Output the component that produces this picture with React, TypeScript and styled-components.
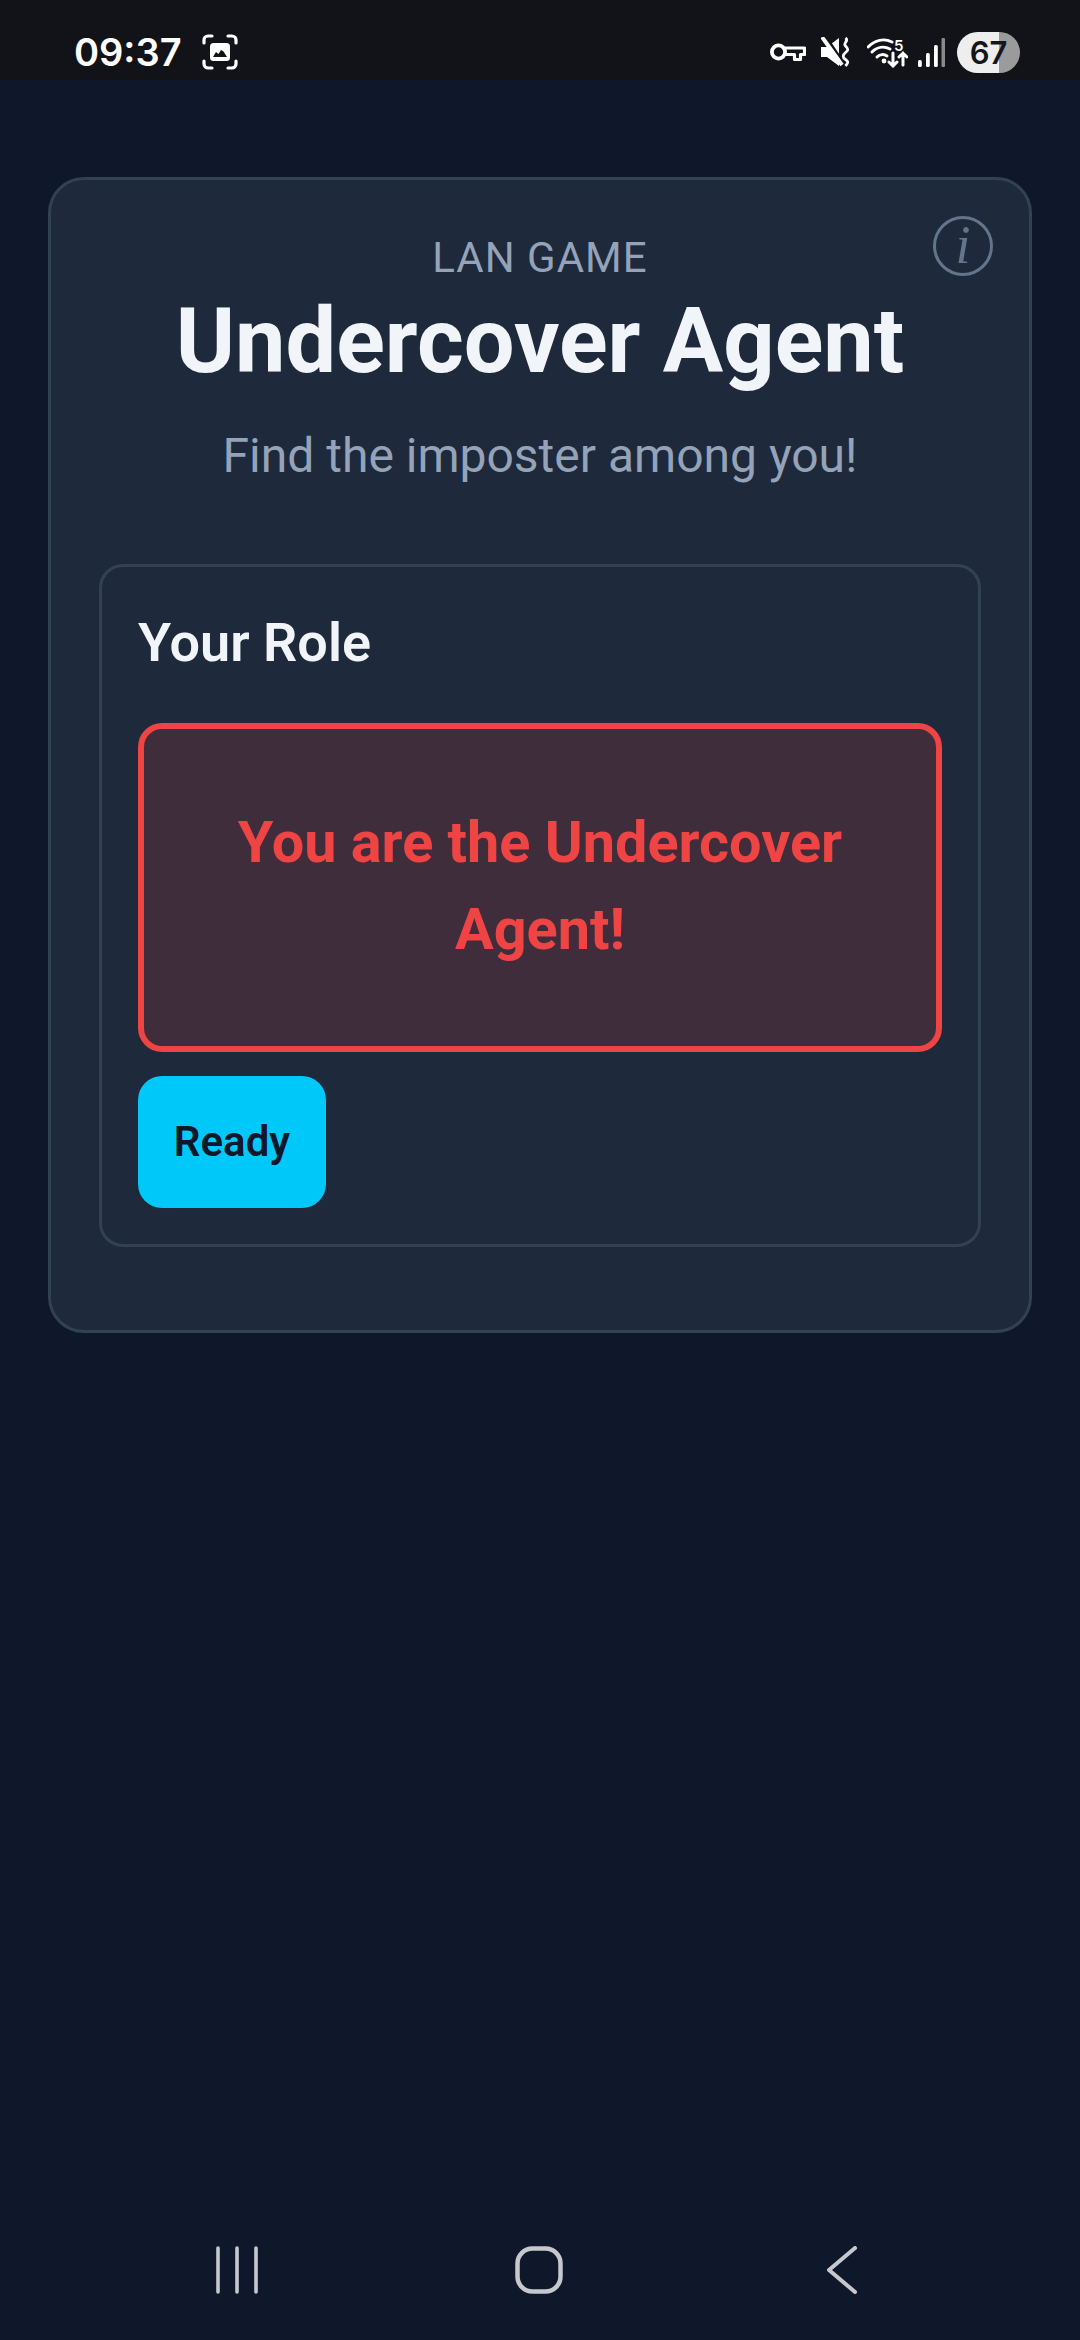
import React from "react";
import styled, { createGlobalStyle } from "styled-components";

const Global = createGlobalStyle`
  html, body { margin: 0; padding: 0; background: #0f172a; }
  body { font-family: Roboto, "Liberation Sans", sans-serif; }
  * { box-sizing: border-box; }
`;

const Screen = styled.div`
  width: 1080px;
  height: 2340px;
  overflow: hidden;
  display: flex;
  flex-direction: column;
  background: #0f172a;
`;

const StatusBar = styled.div`
  height: 80px;
  flex: none;
  background: #111318;
  display: flex;
  align-items: center;
  justify-content: space-between;
  padding: 24px 60px 0 74px;
  color: #fff;
`;

const StatusGroup = styled.div`
  display: flex;
  align-items: center;
`;

const Glyph = styled.svg<{ $ml?: number }>`
  display: block;
  flex: none;
  margin-left: ${(p) => p.$ml ?? 0}px;
`;

const Clock = styled.span`
  font-family: Inter, Roboto, sans-serif;
  font-size: 38px;
  font-weight: 600;
  line-height: 52px;
`;

const Battery = styled.div`
  width: 63px;
  height: 41px;
  margin-left: 12px;
  border-radius: 21px;
  background: linear-gradient(90deg, #eeeeee 0 67%, #9b9b9b 67% 100%);
  color: #14161b;
  font-family: Inter, Roboto, sans-serif;
  font-size: 31px;
  font-weight: 600;
  display: flex;
  align-items: center;
  justify-content: center;
`;

const Main = styled.main`
  flex: 1;
  padding: 97px 48px 0;
`;

const Card = styled.section`
  position: relative;
  background: #1e293b;
  border: 3px solid #334155;
  border-radius: 36px;
  padding: 48px 48px 84px;
  height: 1156px;
`;

const InfoButton = styled.div`
  position: absolute;
  top: 36px;
  right: 36px;
  width: 60px;
  height: 60px;
  border-radius: 50%;
  border: 3px solid #64748b;
  color: #64748b;
  font-family: "Liberation Serif", "DejaVu Serif", serif;
  font-style: italic;
  font-size: 54px;
  line-height: 52px;
  text-align: center;
`;

const Header = styled.header`
  text-align: center;
  display: flex;
  flex-direction: column;
  align-items: center;
`;

const Eyebrow = styled.div`
  font-size: 42px;
  line-height: 54px;
  color: #94a3b8;
  letter-spacing: 1px;
  margin-top: 3px;
`;

const Title = styled.h1`
  margin: 3px 0 0;
  font-size: 90px;
  line-height: 108px;
  font-weight: 700;
  color: #f1f5f9;
`;

const Subtitle = styled.p`
  margin: 27px 0 0;
  font-size: 48px;
  line-height: 66px;
  color: #94a3b8;
`;

const Panel = styled.div`
  margin-top: 75px;
  height: 683px;
  border: 3px solid #334155;
  border-radius: 24px;
  padding: 36px;
  display: flex;
  flex-direction: column;
  align-items: flex-start;
`;

const PanelTitle = styled.h2`
  margin: 4px 0 0;
  font-size: 54px;
  line-height: 72px;
  font-weight: 600;
  color: #f1f5f9;
`;

const RoleBox = styled.div`
  margin-top: 44px;
  width: 100%;
  height: 329px;
  flex: none;
  background: #402d3c;
  border: 6px solid #ef4444;
  border-radius: 24px;
  display: flex;
  align-items: center;
  justify-content: center;
  padding: 0 60px 2px;
  text-align: center;
  color: #ef4444;
  font-size: 57.6px;
  line-height: 86.4px;
  font-weight: 700;
`;

const ReadyButton = styled.button`
  margin-top: 24px;
  width: 188px;
  height: 132px;
  flex: none;
  border: none;
  border-radius: 24px;
  padding: 0 0 2px;
  background: #00c8f8;
  color: #0f172a;
  font-family: inherit;
  font-size: 42px;
  font-weight: 600;
`;

const NavBar = styled.nav`
  height: 140px;
  flex: none;
  display: flex;
  align-items: flex-start;
  padding: 46px 0 0 216px;
`;

export default function App() {
  return (
    <Screen>
      <Global />
      <StatusBar>
        <StatusGroup>
          <Clock>09:37</Clock>
          <Glyph $ml={20} width="36" height="36" viewBox="0 0 36 36" fill="none">
            <g stroke="#fff" strokeWidth="3.2" strokeLinecap="round">
              <path d="M2 9V6a4 4 0 0 1 4-4h4" />
              <path d="M26 2h4a4 4 0 0 1 4 4v3" />
              <path d="M2 27v3a4 4 0 0 0 4 4h4" />
              <path d="M26 34h4a4 4 0 0 0 4-4v-3" />
            </g>
            <rect x="8" y="9" width="20" height="18" rx="3.5" fill="#fff" />
            <path d="M11 23l3-5 2.500 2 2.500-4 2.500 1.500 3.500 5.500z" fill="#111318" />
          </Glyph>
        </StatusGroup>
        <StatusGroup>
          <Glyph width="36" height="20" viewBox="0 0 36 20" fill="none">
            <circle cx="8.500" cy="10" r="6.600" stroke="#fff" strokeWidth="3.800" />
            <path d="M15 6h19.500v6.500h-4v5h-6v-5h-9" stroke="#fff" strokeWidth="3.200" strokeLinejoin="round" />
          </Glyph>
          <Glyph $ml={15} width="30" height="30" viewBox="0 0 30 30" fill="none">
            <path d="M0 10h6L18 1v28L6 20H0z" fill="#fff" />
            <path d="M5 0l18 27" stroke="#111318" strokeWidth="3" />
            <path d="M1 0l20 28" stroke="#fff" strokeWidth="4" />
            <path d="M24.500 1c4 3-3 5 0 8s3 4 0 6.500 -3 5 0 7 3 3 0 6.500" stroke="#fff" strokeWidth="2.800" />
          </Glyph>
          <Glyph $ml={16} width="41" height="31" viewBox="0 0 41 31" fill="none">
            <g stroke="#fff" strokeWidth="3" strokeLinecap="round">
              <path d="M1 10C8 3 17 1 25 5" />
              <path d="M5 15c5-5 12-6 18-3" />
              <path d="M10 20c3-3 7-3 10-1" />
              <path d="M26 16v13M22 25l4 4 4-4" />
              <path d="M36 28V16M32 20l4-4 4 4" />
            </g>
            <circle cx="17" cy="24" r="2.400" fill="#fff" />
            <text x="27" y="14" fill="#fff" fontFamily="Inter, Roboto, sans-serif" fontSize="15" fontWeight="600">5</text>
          </Glyph>
          <Glyph $ml={10} width="27" height="29" viewBox="0 0 27 29" fill="none">
            <rect x="0" y="22" width="3.800" height="7" rx="1.500" fill="#fff" />
            <rect x="8" y="15" width="3.800" height="14" rx="1.500" fill="#fff" />
            <rect x="16" y="7" width="3.800" height="22" rx="1.500" fill="#fff" />
            <rect x="23.500" y="0" width="3.500" height="29" rx="1" fill="#8a8a8a" />
          </Glyph>
          <Battery>67</Battery>
        </StatusGroup>
      </StatusBar>
      <Main>
        <Card>
          <InfoButton>i</InfoButton>
          <Header>
            <Eyebrow>LAN GAME</Eyebrow>
            <Title>Undercover Agent</Title>
            <Subtitle>Find the imposter among you!</Subtitle>
          </Header>
          <Panel>
            <PanelTitle>Your Role</PanelTitle>
            <RoleBox>You are the Undercover Agent!</RoleBox>
            <ReadyButton>Ready</ReadyButton>
          </Panel>
        </Card>
      </Main>
      <NavBar>
        <Glyph width="42" height="48" viewBox="0 0 42 48" fill="none">
          <path d="M2 2v44M21 2v44M40 2v44" stroke="#c6c8cd" strokeWidth="3.600" strokeLinecap="round" />
        </Glyph>
        <Glyph $ml={257} width="48" height="48" viewBox="0 0 48 48" fill="none">
          <rect x="2.500" y="2.500" width="43" height="43" rx="15" stroke="#c6c8cd" strokeWidth="4.500" />
        </Glyph>
        <Glyph $ml={264} width="30" height="48" viewBox="0 0 30 48" fill="none">
          <path d="M28 2L2 24l26 22" stroke="#c6c8cd" strokeWidth="4" strokeLinecap="round" strokeLinejoin="round" />
        </Glyph>
      </NavBar>
    </Screen>
  );
}
